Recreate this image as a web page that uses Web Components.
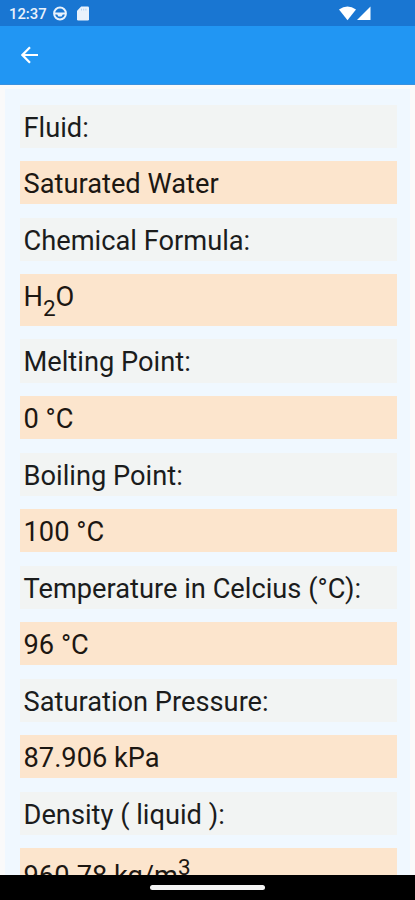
<!DOCTYPE html>
<html lang="en">
<head>
<meta charset="utf-8">
<meta name="viewport" content="width=device-width, initial-scale=1">
<title>Fluid properties</title>
<style>
  html, body { margin: 0; height: 100%; overflow: hidden; }
  body { font-family: Roboto, "Liberation Sans", sans-serif; }
</style>
</head>
<body>
<fluid-app>
  <status-bar slot="top" time="12:37"></status-bar>
  <app-bar slot="top"></app-bar>

  <property-row>Fluid:</property-row>
  <property-row value>Saturated Water</property-row>
  <property-row>Chemical Formula:</property-row>
  <property-row value sub>H<sub>2</sub>O</property-row>
  <property-row>Melting Point:</property-row>
  <property-row value>0 °C</property-row>
  <property-row>Boiling Point:</property-row>
  <property-row value>100 °C</property-row>
  <property-row>Temperature in Celcius (°C):</property-row>
  <property-row value>96 °C</property-row>
  <property-row>Saturation Pressure:</property-row>
  <property-row value>87.906 kPa</property-row>
  <property-row>Density ( liquid ):</property-row>
  <property-row value sup>960.78 kg/m<sup>3</sup></property-row>

  <nav-bar slot="bottom"></nav-bar>
</fluid-app>

<script>
class FluidApp extends HTMLElement {
  constructor() {
    super();
    this.attachShadow({ mode: 'open' }).innerHTML = `
      <style>
        :host {
          display: flex;
          flex-direction: column;
          height: 900px;
          background: #fafafa;
        }
        .content {
          flex: 1;
          min-height: 0;
          overflow: hidden;
          padding: 4px 5px 0;
        }
        .list {
          display: flex;
          flex-direction: column;
          gap: 13.4px;
          padding: 15.5px 13.5px 0 15px;
          background: #f0f8ff;
        }
      </style>
      <slot name="top"></slot>
      <main class="content"><div class="list"><slot></slot></div></main>
      <slot name="bottom"></slot>
    `;
  }
}

/* <status-bar> — clock on the left, connectivity on the right */
class StatusBar extends HTMLElement {
  constructor() {
    super();
    this.attachShadow({ mode: 'open' }).innerHTML = `
      <style>
        :host {
          display: flex;
          align-items: center;
          flex: none;
          height: 26px;
          box-sizing: border-box;
          padding: 1px 44px 0 9px;
          background: #1976d2;
          color: #e9f2fc;
        }
        .time { width: 44px; font-size: 14.8px; font-weight: 500; line-height: 26px; }
        svg { display: block; flex: none; }
        .wheel { margin-right: 10px; }
        .wifi { margin-left: auto; margin-right: 1px; }
      </style>
      <span class="time"></span>
      <svg class="wheel" width="14" height="15" viewBox="0 0 14 15">
        <circle cx="7" cy="7.5" r="5.9" fill="none" stroke="currentColor" stroke-width="2"/>
        <path d="M1.5 6.4H12.5V8.4H9.8L8.6 10.4H5.4L4.2 8.4H1.5Z" fill="currentColor"/>
      </svg>
      <svg width="12" height="15" viewBox="0 0 12 15">
        <path d="M4.2 .5H10.7Q12 .5 12 1.800V13.200Q12 14.500 10.700 14.500H1.300Q0 14.500 0 13.200V4.700Z" fill="currentColor"/>
        <path d="M4.500 2.700V4.500M6.700 2.700V4.500M8.900 2.700V4.500" stroke="#b4d2f0" stroke-width="1"/>
      </svg>
      <svg class="wifi" width="17" height="15" viewBox="0 0 17 15">
        <path d="M0 3.600Q8.500-2.700 17 3.600L8.500 14.200Z" fill="#fff"/>
      </svg>
      <svg width="14" height="15" viewBox="0 0 14 15">
        <path d="M13.500 .5V14H0Z" fill="#fff"/>
      </svg>
    `;
  }

  connectedCallback() {
    this.shadowRoot.querySelector('.time').textContent = this.getAttribute('time');
  }
}

/* <app-bar> — toolbar with the back arrow */
class AppBar extends HTMLElement {
  constructor() {
    super();
    this.attachShadow({ mode: 'open' }).innerHTML = `
      <style>
        :host {
          display: flex;
          align-items: center;
          flex: none;
          height: 59px;
          box-sizing: border-box;
          padding: 0 21px;
          border-bottom: 1px solid #3a91df;
          background: #2196f3;
        }
        button {
          display: flex;
          padding: 0;
          border: none;
          background: none;
          color: #fff;
        }
      </style>
      <button type="button" aria-label="Back">
        <svg width="18" height="18" viewBox="0 0 18 18" fill="none" stroke="currentColor" stroke-width="2.2">
          <path d="M17 9H2M9 1.200L1.400 9L9 16.800"/>
        </svg>
      </button>
    `;
  }
}

/* <property-row> — caption by default, highlighted with the value attribute */
class PropertyRow extends HTMLElement {
  constructor() {
    super();
    this.attachShadow({ mode: 'open' }).innerHTML = `
      <style>
        :host {
          display: block;
          flex: none;
          height: 43.15px;
          box-sizing: border-box;
          padding-left: 3.5px;
          background: #f2f4f3;
          color: #1b1c1c;
          font-size: 27.25px;
          line-height: 47px;
          white-space: nowrap;
        }
        :host([value]) { background: #fce5cd; color: #1c1712; }
        :host([sub]) { height: 52px; }
        :host([sup]) { height: 52px; padding-top: 5px; }
        ::slotted(sub), ::slotted(sup) {
          font-size: 22.5px;
          line-height: 0;
          vertical-align: baseline;
          position: relative;
        }
        ::slotted(sub) { top: 10px; }
        ::slotted(sup) { top: -10.5px; }
      </style>
      <slot></slot>
    `;
  }
}

/* <nav-bar> — gesture handle */
class NavBar extends HTMLElement {
  constructor() {
    super();
    this.attachShadow({ mode: 'open' }).innerHTML = `
      <style>
        :host {
          display: flex;
          justify-content: center;
          flex: none;
          height: 25px;
          box-sizing: border-box;
          padding-top: 10px;
          background: #000;
        }
        .handle { width: 115px; height: 5px; border-radius: 2.5px; background: #f5f5f5; }
      </style>
      <div class="handle"></div>
    `;
  }
}

customElements.define('fluid-app', FluidApp);
customElements.define('status-bar', StatusBar);
customElements.define('app-bar', AppBar);
customElements.define('property-row', PropertyRow);
customElements.define('nav-bar', NavBar);
</script>
</body>
</html>
